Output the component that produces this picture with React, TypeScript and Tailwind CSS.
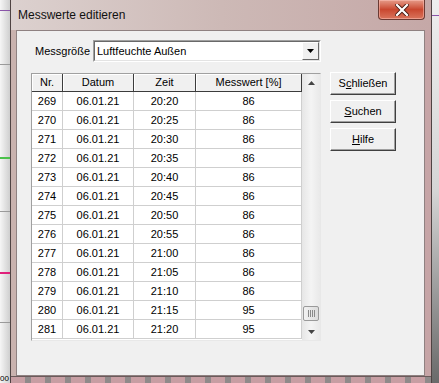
import React from "react"

const rows = [
  ["269", "20:20", "86"],
  ["270", "20:25", "86"],
  ["271", "20:30", "86"],
  ["272", "20:35", "86"],
  ["273", "20:40", "86"],
  ["274", "20:45", "86"],
  ["275", "20:50", "86"],
  ["276", "20:55", "86"],
  ["277", "21:00", "86"],
  ["278", "21:05", "86"],
  ["279", "21:10", "86"],
  ["280", "21:15", "95"],
  ["281", "21:20", "95"],
]

const cols = ["w-[31px]", "w-[71px]", "w-[62px]", "w-[106px]"]

function Btn({ pre, u, post }: { pre: string; u: string; post: string }) {
  return (
    <button className="h-[23px] w-[66px] border border-t-white border-l-white border-r-[#404040] border-b-[#404040] bg-[#f0f0f0] text-[11px] text-black shadow-[inset_-1px_-1px_0_#a0a0a0]">
      {pre}
      <span className="underline">{u}</span>
      {post}
    </button>
  )
}

export default function App() {
  return (
    <div className="flex h-[383px] w-[439px] overflow-hidden bg-[#ececec] font-['Liberation_Sans',Arial,sans-serif] text-black">
      {/* chart behind the dialog, left */}
      <div className="relative h-full w-[10px] shrink-0 bg-gradient-to-r from-[#f6f6f6] to-[#cfcfcf]">
        <div className="absolute left-0 top-[10px] h-px w-full bg-[#8a55a8]" />
        <div className="absolute left-0 top-[64px] h-px w-full bg-[#9a9a9a]" />
        <div className="absolute left-0 top-[157px] h-[2px] w-full bg-[#4cc24c]" />
        <div className="absolute left-0 top-[211px] h-px w-full bg-[#9a9a9a]" />
        <div className="absolute left-0 top-[272px] h-[2px] w-full bg-[#e0207a]" />
        <div className="absolute left-0 top-[322px] h-px w-full bg-[#9a9a9a]" />
        <div className="absolute bottom-0 left-0 text-[8px] leading-none">00</div>
      </div>

      {/* window */}
      <div className="flex h-full w-[422px] shrink-0 flex-col border-x border-[#4f4343] bg-gradient-to-r from-[#c9b2ae] via-[#c7aaa8] to-[#c6a4a6] px-[5px]">
        <div className="-mx-[5px] flex h-[30px] items-start justify-between bg-gradient-to-r from-[#dcd1cf] via-[#cdb9b6] to-[#c5a8a7]">
          <span className="pl-[7px] pt-[8px] text-[12px] leading-[14px] text-[#111]">Messwerte editieren</span>
          <div className="mr-[6px] flex h-[20px] w-[47px] items-center justify-center rounded-b-[4px] border border-t-0 border-[#6b3a33] bg-gradient-to-b from-[#e59a88] via-[#c9472f] to-[#d9745c] shadow-[inset_0_0_0_1px_rgba(255,200,190,0.5)]">
            <svg width="14" height="12" viewBox="0 0 14 12">
              <path d="M2 1 L12 11 M12 1 L2 11" stroke="#4a1a12" strokeWidth="4" strokeLinecap="square" />
              <path d="M2 1 L12 11 M12 1 L2 11" stroke="#fff" strokeWidth="2.2" strokeLinecap="square" />
            </svg>
          </div>
        </div>

        {/* client area */}
        <div className="ml-0 mr-px h-[346px] w-[409px] border border-[#8f8181] bg-[#f0f0f0] pl-[14px] pt-[9px]">
          <div className="flex h-[22px] items-center pl-[4px]">
            <span className="w-[58px] text-[11px]">Messgröße</span>
            <div className="flex h-[22px] w-[228px] border border-t-[#a0a0a0] border-l-[#a0a0a0] border-r-white border-b-white">
              <div className="flex flex-1 items-center border border-t-[#696969] border-l-[#696969] border-r-[#e3e3e3] border-b-[#e3e3e3] bg-white">
                <span className="flex-1 pl-[2px] text-[11px]">Luftfeuchte Außen</span>
                <div className="flex h-full w-[17px] items-center justify-center border border-t-white border-l-white border-r-[#696969] border-b-[#696969] bg-[#f0f0f0]">
                  <svg width="7" height="4" viewBox="0 0 7 4">
                    <path d="M0 0 H7 L3.5 4 Z" fill="#000" />
                  </svg>
                </div>
              </div>
            </div>
          </div>

          <div className="mt-[11px] flex items-start">
            {/* table */}
            <div className="flex h-[268px] w-[290px] border border-t-[#a0a0a0] border-l-[#a0a0a0] border-r-[#e8e8e8] border-b-[#e8e8e8] bg-white">
              <div className="flex w-[270px] flex-col">
                <div className="flex h-[18px] bg-[#f0f0f0]">
                  {["Nr.", "Datum", "Zeit", "Messwert [%]"].map((h, i) => (
                    <div
                      key={h}
                      className={`${cols[i]} flex items-center justify-center border-r border-b border-[#3c3c3c] text-[11px] shadow-[inset_1px_1px_0_#fff]`}
                    >
                      {h}
                    </div>
                  ))}
                </div>
                {rows.map(([nr, zeit, wert]) => (
                  <div key={nr} className="flex h-[19px]">
                    {[nr, "06.01.21", zeit, wert].map((v, i) => (
                      <div
                        key={i}
                        className={`${cols[i]} flex items-center justify-center border-r border-b border-[#cfcfcf] text-[11px]`}
                      >
                        {v}
                      </div>
                    ))}
                  </div>
                ))}
              </div>

              {/* scrollbar */}
              <div className="flex w-[18px] flex-col bg-gradient-to-r from-[#e6e6e6] via-[#f4f4f4] to-[#e9e9e9]">
                <div className="flex h-[17px] items-center justify-center">
                  <svg width="7" height="4" viewBox="0 0 7 4">
                    <path d="M0 4 H7 L3.5 0 Z" fill="#444" />
                  </svg>
                </div>
                <div className="flex flex-1 flex-col justify-end px-px pb-[2px]">
                  <div className="flex h-[15px] items-center justify-center gap-[1px] rounded-[2px] border border-[#9a9a9a] bg-gradient-to-r from-[#f2f2f2] to-[#dcdcdc]">
                    <div className="h-[7px] w-px bg-[#8a8a8a]" />
                    <div className="h-[7px] w-px bg-[#8a8a8a]" />
                    <div className="h-[7px] w-px bg-[#8a8a8a]" />
                    <div className="h-[7px] w-px bg-[#8a8a8a]" />
                  </div>
                </div>
                <div className="flex h-[17px] items-center justify-center">
                  <svg width="7" height="4" viewBox="0 0 7 4">
                    <path d="M0 0 H7 L3.5 4 Z" fill="#444" />
                  </svg>
                </div>
              </div>
            </div>

            {/* buttons */}
            <div className="-mt-px ml-[9px] flex flex-col gap-[5px]">
              <Btn pre="S" u="c" post="hließen" />
              <Btn pre="" u="S" post="uchen" />
              <Btn pre="" u="H" post="ilfe" />
            </div>
          </div>
        </div>

        <div className="h-[7px] -mx-[5px] border-t border-[#6a5a5a] bg-[repeating-linear-gradient(90deg,#c79ea3_0px,#c79ea3_14px,#8f8a8a_14px,#8f8a8a_20px)]" />
      </div>

      {/* right side */}
      <div className="relative h-full flex-1 bg-gradient-to-b from-[#eeeeee] via-[#d5d5d5] to-[#6a6a6a]">
        <div className="absolute left-0 top-[15px] h-px w-full bg-[#8a55a8]" />
      </div>
    </div>
  )
}
